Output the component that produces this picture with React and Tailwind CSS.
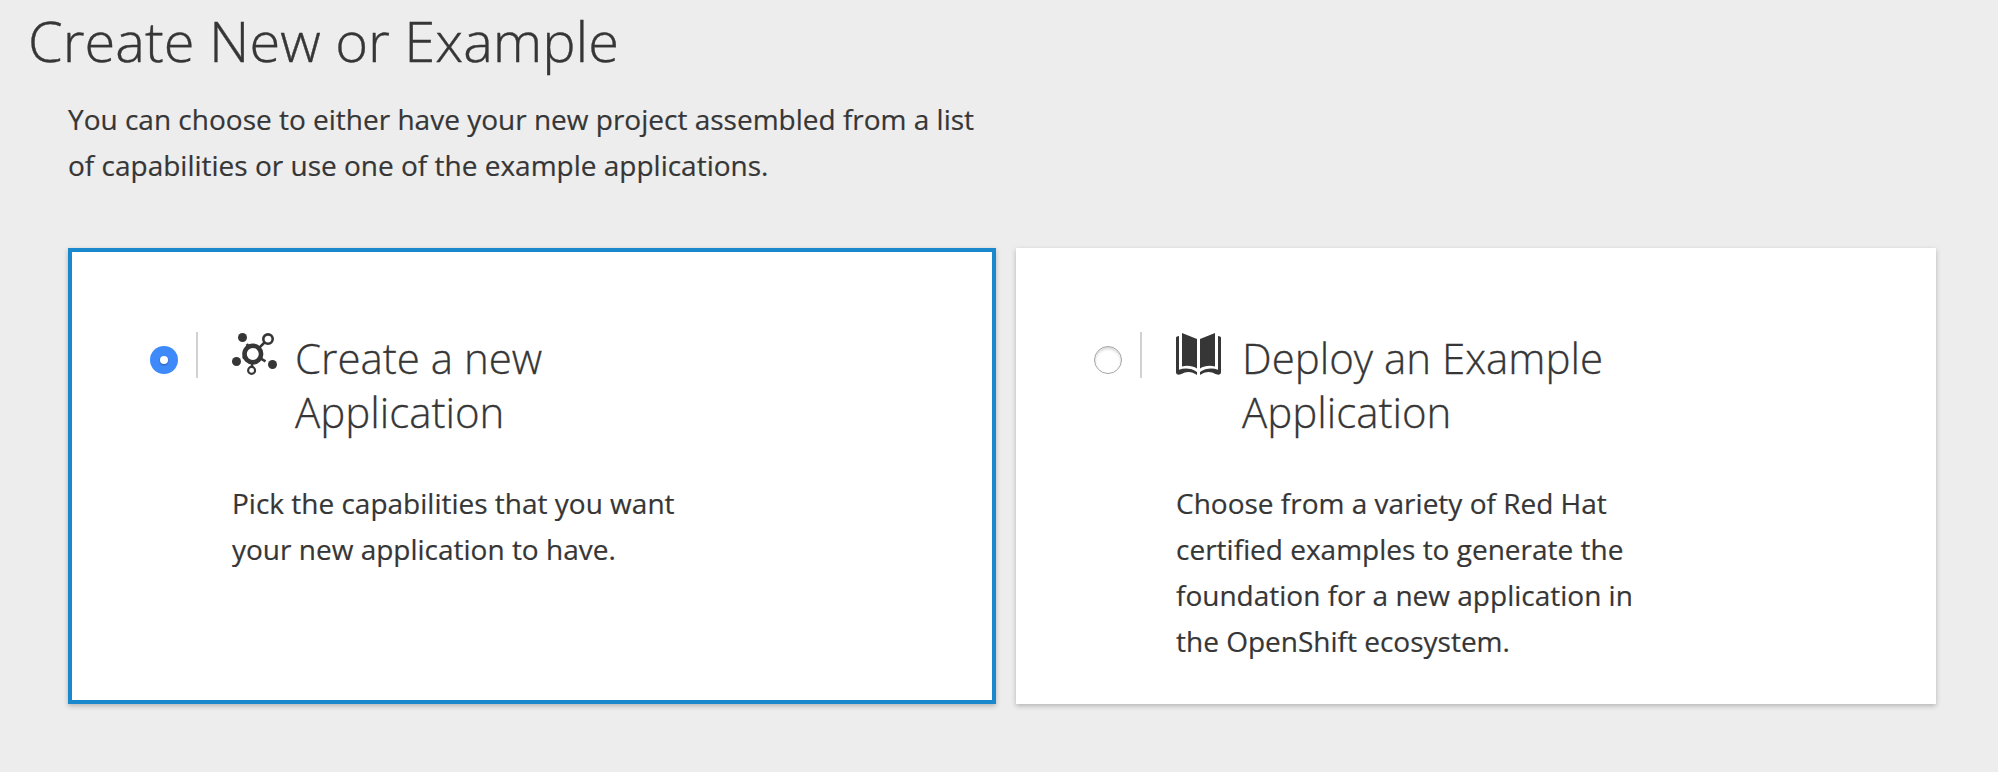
function ClusterIcon() {
  return (
    <svg width="46" height="44" viewBox="0 0 46 44" fill="none" stroke="#363636" className="block">
      <path d="M21 21 L14.8 11 M21 21 L36 6 M21 21 L10.6 25 M21 21 L33.500 28.300 M21 21 L19.800 35" strokeWidth="2.6" />
      <circle cx="20.8" cy="21" r="8.3" strokeWidth="4.6" fill="#fff" />
      <circle cx="36" cy="6.1" r="4.7" strokeWidth="2.6" fill="#fff" />
      <circle cx="19.6" cy="37.4" r="3.5" strokeWidth="2.1" fill="#fff" />
      <g fill="#363636" stroke="none">
        <circle cx="10.5" cy="4.5" r="4.5" />
        <circle cx="4.5" cy="28.5" r="4.5" />
        <circle cx="40.5" cy="31.5" r="4.5" />
      </g>
    </svg>
  );
}

function BookIcon() {
  return (
    <svg width="46" height="44" viewBox="0 0 46 44" fill="#363636" className="block">
      <path d="M6 0 L21 6 V35.5 C17 32.800 11 32 6 33.500 Z" />
      <path d="M0 4.500 Q0.300 3.300 3 3 V36.800 C9 34.600 16 35.500 21 39 V42 C16 38.200 10 38 5.500 41 Q0 42.800 0 39.500 Z" />
      <path d="M39 0 L24 6 V35.5 C28 32.800 34 32 39 33.500 Z" />
      <path d="M45 4.500 Q44.700 3.300 42 3 V36.800 C36 34.600 29 35.500 24 39 V42 C29 38.200 35 38 39.500 41 Q45 42.800 45 39.500 Z" />
    </svg>
  );
}

function Radio({ checked }) {
  return checked ? (
    <span role="radio" aria-checked="true" className="mt-[14px] flex size-7 shrink-0 items-center justify-center rounded-full bg-[#3f8afa]">
      <span className="size-2 rounded-full bg-white shadow-[0_1px_2px_rgba(0,0,0,0.35)]" />
    </span>
  ) : (
    <span role="radio" aria-checked="false" className="mt-[14px] size-7 shrink-0 rounded-full border border-[#a5a5a5] bg-white shadow-[inset_0_2px_3px_rgba(0,0,0,0.16)]" />
  );
}

function Card({ checked, icon, title, titleClass, lines, className }) {
  return (
    <section className={`flex h-[456px] bg-white shadow-[0_2px_5px_rgba(3,3,3,0.24)] ${className}`}>
      <Radio checked={checked} />
      <span className="ml-[18px] h-[46px] w-0.5 shrink-0 bg-[#d1d1d1]" />
      <div className="ml-[34px]">
        <div className="flex">
          <div className="mt-px shrink-0">{icon}</div>
          <h2 className={`-mt-px text-[42px] leading-[54px] font-light [-webkit-text-stroke:0.3px] ${titleClass}`}>
            {title.map((t) => (
              <span key={t} className="block whitespace-nowrap">{t}</span>
            ))}
          </h2>
        </div>
        <p className="mt-[41px] text-[28px] leading-[46px] [-webkit-text-stroke:0.2px]">
          {lines.map((t) => (
            <span key={t} className="block whitespace-nowrap">{t}</span>
          ))}
        </p>
      </div>
    </section>
  );
}

export default function App() {
  return (
    <main className="h-[772px] w-[1998px] overflow-hidden bg-[#ededed] font-['Open_Sans',sans-serif] text-[#363636]">
      <h1 className="pl-7 text-[56px] leading-[80px] font-light whitespace-nowrap [-webkit-text-stroke:0.4px]">Create New or Example</h1>
      <p className="mt-4 pl-[68px] text-[28px] leading-[46px] [-webkit-text-stroke:0.2px]">
        <span className="block whitespace-nowrap">You can choose to either have your new project assembled from a list</span>
        <span className="block whitespace-nowrap">of capabilities or use one of the example applications.</span>
      </p>
      <div className="mt-15 flex gap-5 pl-[68px]">
        <Card
          checked
          icon={<ClusterIcon />}
          title={["Create a new", "Application"]}
          titleClass="ml-[17px]"
          lines={["Pick the capabilities that you want", "your new application to have."]}
          className="w-[928px] border-4 border-[#1a88cd] pt-20 pl-[78px]"
        />
        <Card
          icon={<BookIcon />}
          title={["Deploy an Example", "Application"]}
          titleClass="ml-[20px]"
          lines={["Choose from a variety of Red Hat", "certified examples to generate the", "foundation for a new application in", "the OpenShift ecosystem."]}
          className="w-[920px] pt-[84px] pl-[78px]"
        />
      </div>
    </main>
  );
}
